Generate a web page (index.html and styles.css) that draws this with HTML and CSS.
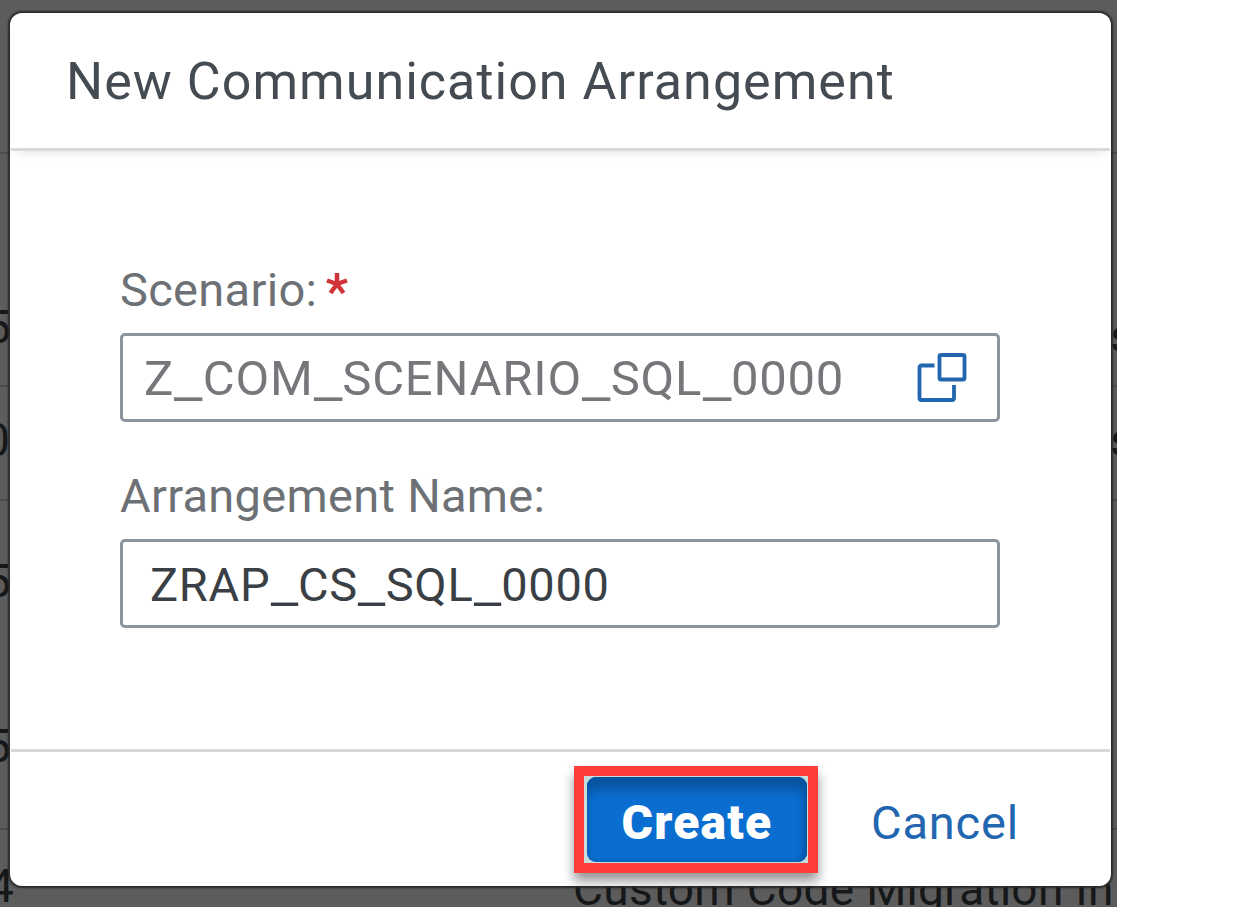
FILE: index.html
```html
<!DOCTYPE html>
<html lang="en">
<head>
<meta charset="utf-8">
<title>New Communication Arrangement</title>
<link rel="stylesheet" href="styles.css">
</head>
<body>
<div class="backdrop">
  <div class="behind" aria-hidden="true">
    <span class="row-line line-a"></span>
    <span class="row-line line-b"></span>
    <span class="row-line line-c"></span>
    <span class="row-line line-d"></span>
    <span class="digit digit-a">5</span>
    <span class="digit digit-b">0</span>
    <span class="digit digit-c">5</span>
    <span class="digit digit-d">5</span>
    <span class="digit digit-e">4</span>
    <span class="digit edge-a">s</span>
    <span class="digit edge-b">s</span>
    <span class="digit app-name">Custom Code Migration In</span>
  </div>
  <section class="dialog" role="dialog">
    <header class="dialog-header"><h1 class="title">New Communication Arrangement</h1></header>
    <div class="dialog-body">
      <div class="label"><span class="scenario-label">Scenario:</span><svg class="required" viewBox="0 0 22 22"><path d="M11 11V0M11 11L1 7.500M11 11L21 7.500M11 11L4.500 20M11 11L17.500 20"/></svg></div>
      <div class="field">
        <span class="scenario-value">Z<span class="wide">_</span>COM<span class="wide">_</span>SCENARIO<span class="wide">_</span>SQL<span class="wide">_</span>0000</span>
        <svg class="value-help" viewBox="0 0 50 50"><rect x="22.500" y="2" width="25" height="24.500" rx="1.500"/><path d="M17.500 12.500H4.500Q2.500 12.500 2.500 14.500V45Q2.500 47 4.500 47H35Q37 47 37 45V32"/></svg>
      </div>
      <div class="label second"><span class="name-label">Arrangement Name:</span></div>
      <div class="field"><span class="name-value">ZRAP<span class="wide">_</span>CS<span class="wide">_</span>SQL<span class="wide">_</span>0000</span></div>
    </div>
    <footer class="dialog-footer">
      <div class="highlight"><button class="create"><span class="create-text">Create</span></button></div>
      <button class="cancel">Cancel</button>
    </footer>
  </section>
</div>
</body>
</html>
```
FILE: styles.css
```css
* { box-sizing: border-box; }
body {
  margin: 0;
  background: #fff;
  font-family: Roboto, "Liberation Sans", sans-serif;
}
.backdrop {
  position: relative;
  width: 1117px;
  height: 907px;
  padding: 13px 0 0 10px;
  background: #5c5c5c;
  overflow: hidden;
}
.behind { position: absolute; inset: 0; }
.digit {
  position: absolute;
  font-size: 46px;
  line-height: 46px;
  color: #151719;
  white-space: nowrap;
}
.digit-a { left: -15px; top: 304px; }
.digit-b { left: -16px; top: 417px; }
.digit-c { left: -15px; top: 558px; }
.digit-d { left: -15px; top: 723px; }
.digit-e { left: -12px; top: 863px; }
.edge-a { left: 1110px; top: 313px; }
.edge-b { left: 1110px; top: 417px; }
.app-name { left: 573px; top: 866px; letter-spacing: 0.3px; }
.row-line { position: absolute; left: 0; width: 1117px; height: 2px; background: #4b4b4b; }
.line-a { top: 152px; }
.line-b { top: 385px; }
.line-c { top: 499px; }
.line-d { top: 828px; }
.dialog {
  position: relative;
  display: flex;
  flex-direction: column;
  width: 1101px;
  height: 873px;
  border-radius: 12px;
  background: #fff;
  box-shadow: 0 0 2px 2px #292929;
}
.dialog-header {
  height: 138px;
  margin: 0 1px;
  padding: 38px 0 0 55px;
  border-bottom: 3px solid #d9d9d9;
  box-shadow: 0 8px 10px -6px rgba(0, 0, 0, .1);
}
.title {
  margin: 0;
  font-size: 52px;
  line-height: 62px;
  font-weight: 400;
  color: #454b52;
  letter-spacing: 1.04px;
  white-space: nowrap;
}
.dialog-body { flex: 1; padding: 111px 110px 0; }
.label {
  display: flex;
  height: 71px;
  font-size: 47px;
  line-height: 56px;
  letter-spacing: .3px;
  color: #6d7175;
  white-space: nowrap;
}
.second { margin-top: 46px; }
.scenario-label { width: 206px; }
.required { width: 22px; height: 22px; margin-top: 11px; fill: none; stroke: #d13438; stroke-width: 4.5; }
.field {
  display: flex;
  align-items: center;
  justify-content: space-between;
  width: 880px;
  height: 89px;
  padding: 0 30px 0 21px;
  border: 3px solid #8c959e;
  border-radius: 5px;
  white-space: nowrap;
}
.scenario-value { padding-top: 2px; font-size: 49px; letter-spacing: .78px; color: #76777b; }
.name-value { padding: 1px 0 0 6px; font-size: 47px; letter-spacing: .7px; color: #3a3f45; }
.wide { display: inline-block; margin: 0 3.3px; letter-spacing: 0; transform: translateY(2px) scaleX(1.3); }
.value-help { width: 50px; height: 50px; fill: none; stroke: #2266b0; stroke-width: 3.8; }
.dialog-footer {
  display: flex;
  height: 137px;
  margin: 0 1px;
  padding-left: 563px;
  border-top: 3px solid #d9d9d9;
}
button { border: 0; font-family: inherit; }
.highlight {
  width: 244px;
  height: 107px;
  margin-top: 14px;
  padding: 1px 1px 1px 3px;
  border: 10px solid #ff3d3d;
  background: #c8dcdc;
  box-shadow: 0 8px 11px rgba(0, 0, 0, .42);
}
.create {
  width: 220px;
  height: 85px;
  padding: 6px 0 0;
  border-radius: 9px;
  background: #0a6ed1;
  box-shadow: inset 0 15px 12px -2px #0854a0, inset -3px 0 5px #0854a0;
  color: #fff;
  font-size: 48px;
  font-weight: 900;
  letter-spacing: 1.2px;
}
.cancel {
  height: 107px;
  margin-top: 14px;
  padding: 5px 0 0 53px;
  background: none;
  color: #2266b0;
  font-size: 47px;
  letter-spacing: .8px;
}
```
